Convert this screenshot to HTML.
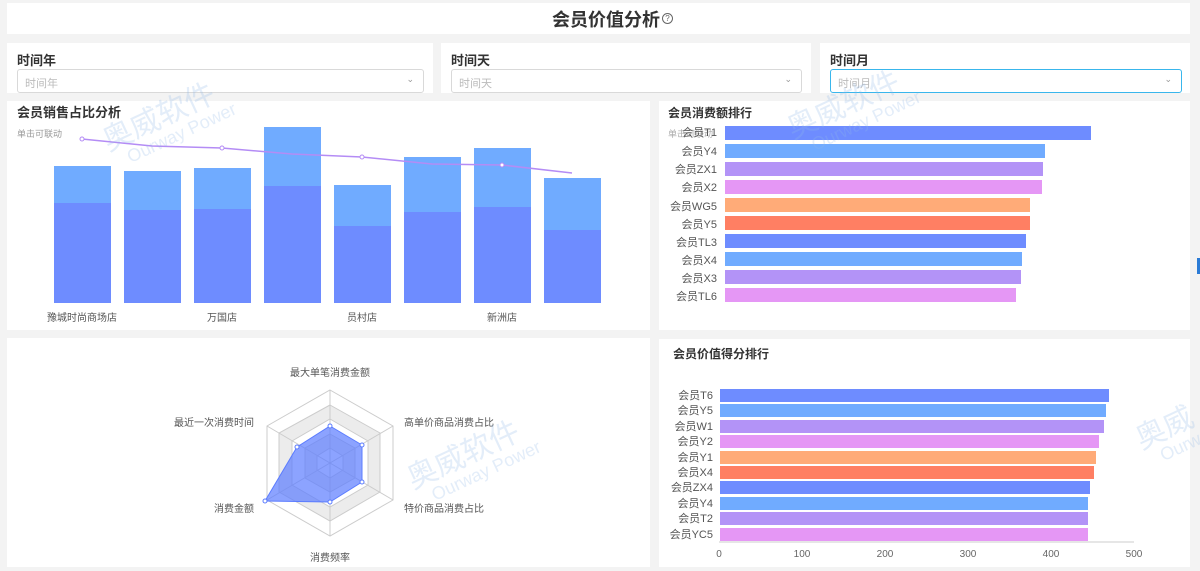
<!DOCTYPE html>
<html><head><meta charset="utf-8">
<style>
*{margin:0;padding:0;box-sizing:border-box}
body{width:1200px;height:571px;background:#f3f3f3;font-family:"Liberation Sans","Noto Sans CJK SC",sans-serif;position:relative;overflow:hidden;color:#333}
.p{position:absolute;background:#fff}
.lbl{position:absolute;font-size:13px;font-weight:bold;color:#333}
.sel{position:absolute;border:1px solid #d9d9d9;border-radius:3px;height:24px;font-size:11px;color:#bbb;padding:5px 7px;background:#fff}
.sel span{position:absolute;right:9px;top:4px;font-size:9px;color:#999}
svg{position:absolute;left:0;top:0}
</style></head><body>
<div class="p" style="left:7px;top:3px;width:1183px;height:31px"></div>
<div style="position:absolute;left:552px;top:6px;font-size:18px;font-weight:bold;color:#333">会员价值分析</div>
<div style="position:absolute;left:662px;top:13px;width:11px;height:11px;border:1px solid #666;border-radius:50%;font-size:8px;line-height:9px;text-align:center;color:#666">?</div>

<div class="p" style="left:7px;top:43px;width:426px;height:50px"></div>
<div class="p" style="left:441px;top:43px;width:370px;height:50px"></div>
<div class="p" style="left:820px;top:43px;width:370px;height:50px"></div>
<div class="lbl" style="left:17px;top:50px">时间年</div>
<div class="lbl" style="left:451px;top:50px">时间天</div>
<div class="lbl" style="left:830px;top:50px">时间月</div>
<div class="sel" style="left:17px;top:69px;width:407px">时间年<span>⌄</span></div>
<div class="sel" style="left:451px;top:69px;width:351px">时间天<span>⌄</span></div>
<div class="sel" style="left:830px;top:69px;width:352px;border-color:#39b6ec">时间月<span>⌄</span></div>

<div class="p" style="left:7px;top:101px;width:643px;height:229px"></div>
<div class="p" style="left:659px;top:101px;width:531px;height:229px"></div>
<div class="p" style="left:7px;top:338px;width:643px;height:229px"></div>
<div class="p" style="left:659px;top:339px;width:531px;height:228px"></div>
<div style="position:absolute;left:1197px;top:258px;width:3px;height:16px;background:#2a7bd6"></div>

<svg width="1200" height="571" font-family="Liberation Sans, Noto Sans CJK SC, sans-serif">
<text x="17" y="117" font-size="13" font-weight="bold" fill="#333">会员销售占比分析</text>
<text x="17" y="137" font-size="9" fill="#999">单击可联动</text>
<g fill="#6e8cff">
<rect x="54" y="203" width="57" height="100"/><rect x="124" y="210" width="57" height="93"/><rect x="194" y="209" width="57" height="94"/><rect x="264" y="186" width="57" height="117"/><rect x="334" y="226" width="57" height="77"/><rect x="404" y="212" width="57" height="91"/><rect x="474" y="207" width="57" height="96"/><rect x="544" y="230" width="57" height="73"/></g>
<g fill="#70abff">
<rect x="54" y="166" width="57" height="37"/><rect x="124" y="171" width="57" height="39"/><rect x="194" y="168" width="57" height="41"/><rect x="264" y="127" width="57" height="59"/><rect x="334" y="185" width="57" height="41"/><rect x="404" y="157" width="57" height="55"/><rect x="474" y="148" width="57" height="59"/><rect x="544" y="178" width="57" height="52"/></g>
<polyline points="82,139 152,146 222,148 292,154 362,157 432,164 502,165 572,173" fill="none" stroke="#b48cf5" stroke-width="1.5"/>
<g fill="#fff" stroke="#b48cf5"><circle cx="82" cy="139" r="2"/><circle cx="222" cy="148" r="2"/><circle cx="362" cy="157" r="2"/><circle cx="502" cy="165" r="2"/></g>
<g font-size="10" fill="#555" text-anchor="middle"><text x="82" y="321">豫城时尚商场店</text><text x="222" y="321">万国店</text><text x="362" y="321">员村店</text><text x="502" y="321">新洲店</text></g>

<text x="668" y="117" font-size="12" font-weight="bold" fill="#333">会员消费额排行</text>
<text x="668" y="137" font-size="9" fill="#aaa">单击可联动</text>
<g font-size="11" fill="#555" text-anchor="end">
<text x="717" y="136">会员T1</text><text x="717" y="155">会员Y4</text><text x="717" y="173">会员ZX1</text><text x="717" y="191">会员X2</text><text x="717" y="210">会员WG5</text><text x="717" y="228">会员Y5</text><text x="717" y="246">会员TL3</text><text x="717" y="264">会员X4</text><text x="717" y="282">会员X3</text><text x="717" y="300">会员TL6</text></g>
<rect x="725" y="126" width="366" height="14" fill="#6e8cff"/>
<rect x="725" y="144" width="320" height="14" fill="#70abff"/>
<rect x="725" y="162" width="318" height="14" fill="#b393f7"/>
<rect x="725" y="180" width="317" height="14" fill="#e597f5"/>
<rect x="725" y="198" width="305" height="14" fill="#ffab78"/>
<rect x="725" y="216" width="305" height="14" fill="#ff7f63"/>
<rect x="725" y="234" width="301" height="14" fill="#6e8cff"/>
<rect x="725" y="252" width="297" height="14" fill="#70abff"/>
<rect x="725" y="270" width="296" height="14" fill="#b393f7"/>
<rect x="725" y="288" width="291" height="14" fill="#e597f5"/>

<g fill="none" stroke="#ccc">
<polygon points="330,390 393,426 393,500 330,536 267,500 267,426"/>
<polygon points="330,405 380,433 380,492 330,521 279,492 279,433" fill="#ececec"/>
<polygon points="330,419 368,441 368,485 330,507 292,485 292,441" fill="#fff"/>
<polygon points="330,434 355,448 355,478 330,492 305,478 305,448" fill="#ececec"/>
<polygon points="330,448 343,456 343,470 330,478 317,470 317,456" fill="#fff"/>
<line x1="330" y1="390" x2="330" y2="536"/><line x1="267" y1="426" x2="393" y2="500"/><line x1="393" y1="426" x2="267" y2="500"/>
</g>
<polygon points="330,426 362,445 362,482 330,502 265,501 297,447" fill="#5b7cff" fill-opacity="0.7" stroke="#5b7cff"/>
<g fill="#fff" stroke="#5b7cff"><circle cx="330" cy="426" r="2"/><circle cx="362" cy="445" r="2"/><circle cx="362" cy="482" r="2"/><circle cx="330" cy="502" r="2"/><circle cx="265" cy="501" r="2"/><circle cx="297" cy="447" r="2"/></g>
<g font-size="10" fill="#555">
<text x="330" y="376" text-anchor="middle">最大单笔消费金额</text>
<text x="404" y="426">高单价商品消费占比</text>
<text x="404" y="512">特价商品消费占比</text>
<text x="330" y="561" text-anchor="middle">消费频率</text>
<text x="254" y="512" text-anchor="end">消费金额</text>
<text x="254" y="426" text-anchor="end">最近一次消费时间</text></g>

<text x="673" y="358" font-size="12" font-weight="bold" fill="#333">会员价值得分排行</text>
<g font-size="11" fill="#555" text-anchor="end">
<text x="713" y="399">会员T6</text><text x="713" y="414">会员Y5</text><text x="713" y="430">会员W1</text><text x="713" y="445">会员Y2</text><text x="713" y="461">会员Y1</text><text x="713" y="476">会员X4</text><text x="713" y="491">会员ZX4</text><text x="713" y="507">会员Y4</text><text x="713" y="522">会员T2</text><text x="713" y="538">会员YC5</text></g>
<rect x="720" y="389" width="389" height="13" fill="#6e8cff"/>
<rect x="720" y="404" width="386" height="13" fill="#70abff"/>
<rect x="720" y="420" width="384" height="13" fill="#b393f7"/>
<rect x="720" y="435" width="379" height="13" fill="#e597f5"/>
<rect x="720" y="451" width="376" height="13" fill="#ffab78"/>
<rect x="720" y="466" width="374" height="13" fill="#ff7f63"/>
<rect x="720" y="481" width="370" height="13" fill="#6e8cff"/>
<rect x="720" y="497" width="368" height="13" fill="#70abff"/>
<rect x="720" y="512" width="368" height="13" fill="#b393f7"/>
<rect x="720" y="528" width="368" height="13" fill="#e597f5"/>
<line x1="719" y1="542" x2="1134" y2="542" stroke="#ccc"/>
<g font-size="10" fill="#666" text-anchor="middle"><text x="719" y="557">0</text><text x="802" y="557">100</text><text x="885" y="557">200</text><text x="968" y="557">300</text><text x="1051" y="557">400</text><text x="1134" y="557">500</text></g>

<g fill="#8fb8e8" fill-opacity="0.25" font-size="30" transform="rotate(-25 150 110)"><text x="95" y="130">奥威软件</text><text x="110" y="150" font-size="18">Ourway Power</text></g>
<g fill="#8fb8e8" fill-opacity="0.25" font-size="30" transform="rotate(-25 830 100)"><text x="780" y="120">奥威软件</text><text x="795" y="140" font-size="18">Ourway Power</text></g>
<g fill="#8fb8e8" fill-opacity="0.25" font-size="30" transform="rotate(-25 450 450)"><text x="400" y="470">奥威软件</text><text x="415" y="490" font-size="18">Ourway Power</text></g>
<g fill="#8fb8e8" fill-opacity="0.25" font-size="30" transform="rotate(-25 1160 430)"><text x="1135" y="440">奥威</text><text x="1150" y="460" font-size="18">Ourwa</text></g>
</svg>
</body></html>
